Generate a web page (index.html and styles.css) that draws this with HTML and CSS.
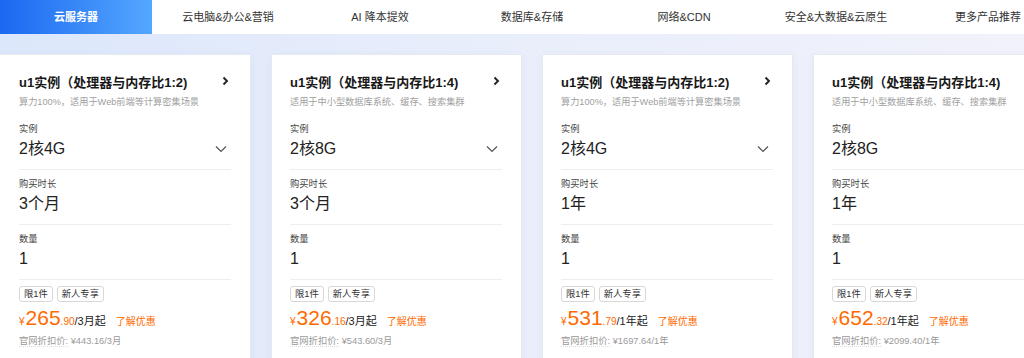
FILE: index.html
```html
<!DOCTYPE html>
<html lang="zh-CN">
<head>
    <meta charset="UTF-8">
    <meta name="viewport" content="width=device-width, initial-scale=1.0">
    <title>云服务器</title>
    <link rel="stylesheet" href="styles.css">
</head>
<body>
    <div class="tabs">
        <div class="tab active">云服务器</div>
        <div class="tab">云电脑&amp;办公&amp;营销</div>
        <div class="tab">AI 降本提效</div>
        <div class="tab">数据库&amp;存储</div>
        <div class="tab">网络&amp;CDN</div>
        <div class="tab">安全&amp;大数据&amp;云原生</div>
        <div class="tab">更多产品推荐</div>
    </div>
    <div class="main">
        <div class="cards" id="cards"></div>
    </div>
    <script>
        const products = [
            { title: "u1实例（处理器与内存比1:2)", desc: "算力100%，适用于Web前端等计算密集场景", spec: "2核4G", time: "3个月", price: "265", cents: ".90", unit: "/3月起", orig: "¥443.16/3月" },
            { title: "u1实例（处理器与内存比1:4)", desc: "适用于中小型数据库系统、缓存、搜索集群", spec: "2核8G", time: "3个月", price: "326", cents: ".16", unit: "/3月起", orig: "¥543.60/3月" },
            { title: "u1实例（处理器与内存比1:2)", desc: "算力100%，适用于Web前端等计算密集场景", spec: "2核4G", time: "1年", price: "531", cents: ".79", unit: "/1年起", orig: "¥1697.64/1年" },
            { title: "u1实例（处理器与内存比1:4)", desc: "适用于中小型数据库系统、缓存、搜索集群", spec: "2核8G", time: "1年", price: "652", cents: ".32", unit: "/1年起", orig: "¥2099.40/1年" }
        ];

        const arrowRight = '<svg class="arrow-right" width="7" height="10" viewBox="0 0 7 10"><path d="M1.5 1.5 L5 5 L1.5 8.5" fill="none" stroke="#222" stroke-width="1.9"/></svg>';
        const arrowDown = '<svg class="arrow-down" width="12" height="8" viewBox="0 0 12 8"><path d="M1 1.5 L6 6.5 L11 1.5" fill="none" stroke="#555" stroke-width="1.2"/></svg>';

        const cardsEl = document.getElementById("cards");
        products.forEach(p => {
            let card = document.createElement("div");
            card.className = "card";
            card.innerHTML = `
                <div class="card-head">
                    <span class="card-title">${p.title}</span>${arrowRight}
                </div>
                <p class="card-desc">${p.desc}</p>
                <div class="field">
                    <p class="field-label">实例</p>
                    <div class="field-value">${p.spec}${arrowDown}</div>
                </div>
                <div class="field">
                    <p class="field-label">购买时长</p>
                    <div class="field-value">${p.time}</div>
                </div>
                <div class="field">
                    <p class="field-label">数量</p>
                    <div class="field-value">1</div>
                </div>
                <div class="tags"><span class="tag">限1件</span><span class="tag">新人专享</span></div>
                <div class="price">
                    <span class="yen">¥</span><span class="num">${p.price}</span><span class="cents">${p.cents}</span><span class="unit">${p.unit}</span><span class="promo">了解优惠</span>
                </div>
                <p class="orig"><span class="orig-label">官网折扣价:</span> ${p.orig}</p>`;
            cardsEl.appendChild(card);
        });
    </script>
</body>
</html>
```

FILE: styles.css
```css
body {
    margin: 0;
    font-family: "Liberation Sans", "Noto Sans CJK SC", sans-serif;
    color: #333;
    background: linear-gradient(90deg, #dce7fb 0%, #e9eefb 50%, #f1f2fb 100%);
    overflow: hidden;
    height: 358px;
}

p {
    margin: 0;
}

.tabs {
    display: flex;
    height: 34px;
    background: #fff;
    overflow: hidden;
}

.tab {
    flex: 0 0 152px;
    line-height: 34px;
    text-align: center;
    font-size: 11px;
    color: #333;
}

.tab.active {
    background: linear-gradient(90deg, #1b68f1 0%, #54a7ff 100%);
    color: #fff;
    font-weight: bold;
}

.main {
    padding-top: 20px;
}

.cards {
    display: flex;
    gap: 20px;
}

.card {
    flex: 0 0 251px;
    box-sizing: border-box;
    height: 320px;
    background: #fff;
    border: 1px solid #e6e9f0;
    border-left: none;
    padding: 17px 19px 0 19px;
    box-shadow: 0 2px 8px rgba(60, 80, 140, 0.06);
}

.card + .card {
    border-left: 1px solid #e6e9f0;
    padding-left: 18px;
}

.card-head {
    display: flex;
    justify-content: space-between;
    align-items: center;
    height: 18px;
}

.card-title {
    font-size: 13px;
    font-weight: bold;
    color: #181818;
}

.arrow-right {
    margin-right: 2px;
}

.card-desc {
    font-size: 9.2px;
    line-height: 16px;
    margin-top: 4px;
    margin-bottom: 5px;
    color: #a0a0a0;
    white-space: nowrap;
}

.field {
    padding: 6px 0 8px;
    border-bottom: 1px solid #eee;
}

.field-label {
    font-size: 9.3px;
    line-height: 16px;
    color: #444;
}

.field-value {
    display: flex;
    justify-content: space-between;
    align-items: center;
    font-size: 16px;
    line-height: 24px;
    color: #222;
}

.arrow-down {
    margin-right: 4px;
}

.tags {
    display: flex;
    gap: 4px;
    margin-top: 6px;
}

.tag {
    font-size: 9.3px;
    line-height: 14px;
    padding: 0 4px;
    border: 1px solid #d8d8d8;
    border-radius: 3px;
    color: #333;
}

.price {
    margin-top: 3px;
    line-height: 25px;
    white-space: nowrap;
    color: #ff6a00;
}

.yen {
    font-size: 10px;
    margin-right: 1px;
}

.num {
    font-size: 21px;
}

.cents {
    font-size: 10px;
}

.unit {
    font-size: 11px;
    color: #222;
}

.promo {
    font-size: 10px;
    margin-left: 10px;
}

.orig {
    font-size: 9.3px;
    line-height: 14px;
    color: #999;
}

.orig-label {
    border-bottom: 1px dotted #ddd;
}
```
